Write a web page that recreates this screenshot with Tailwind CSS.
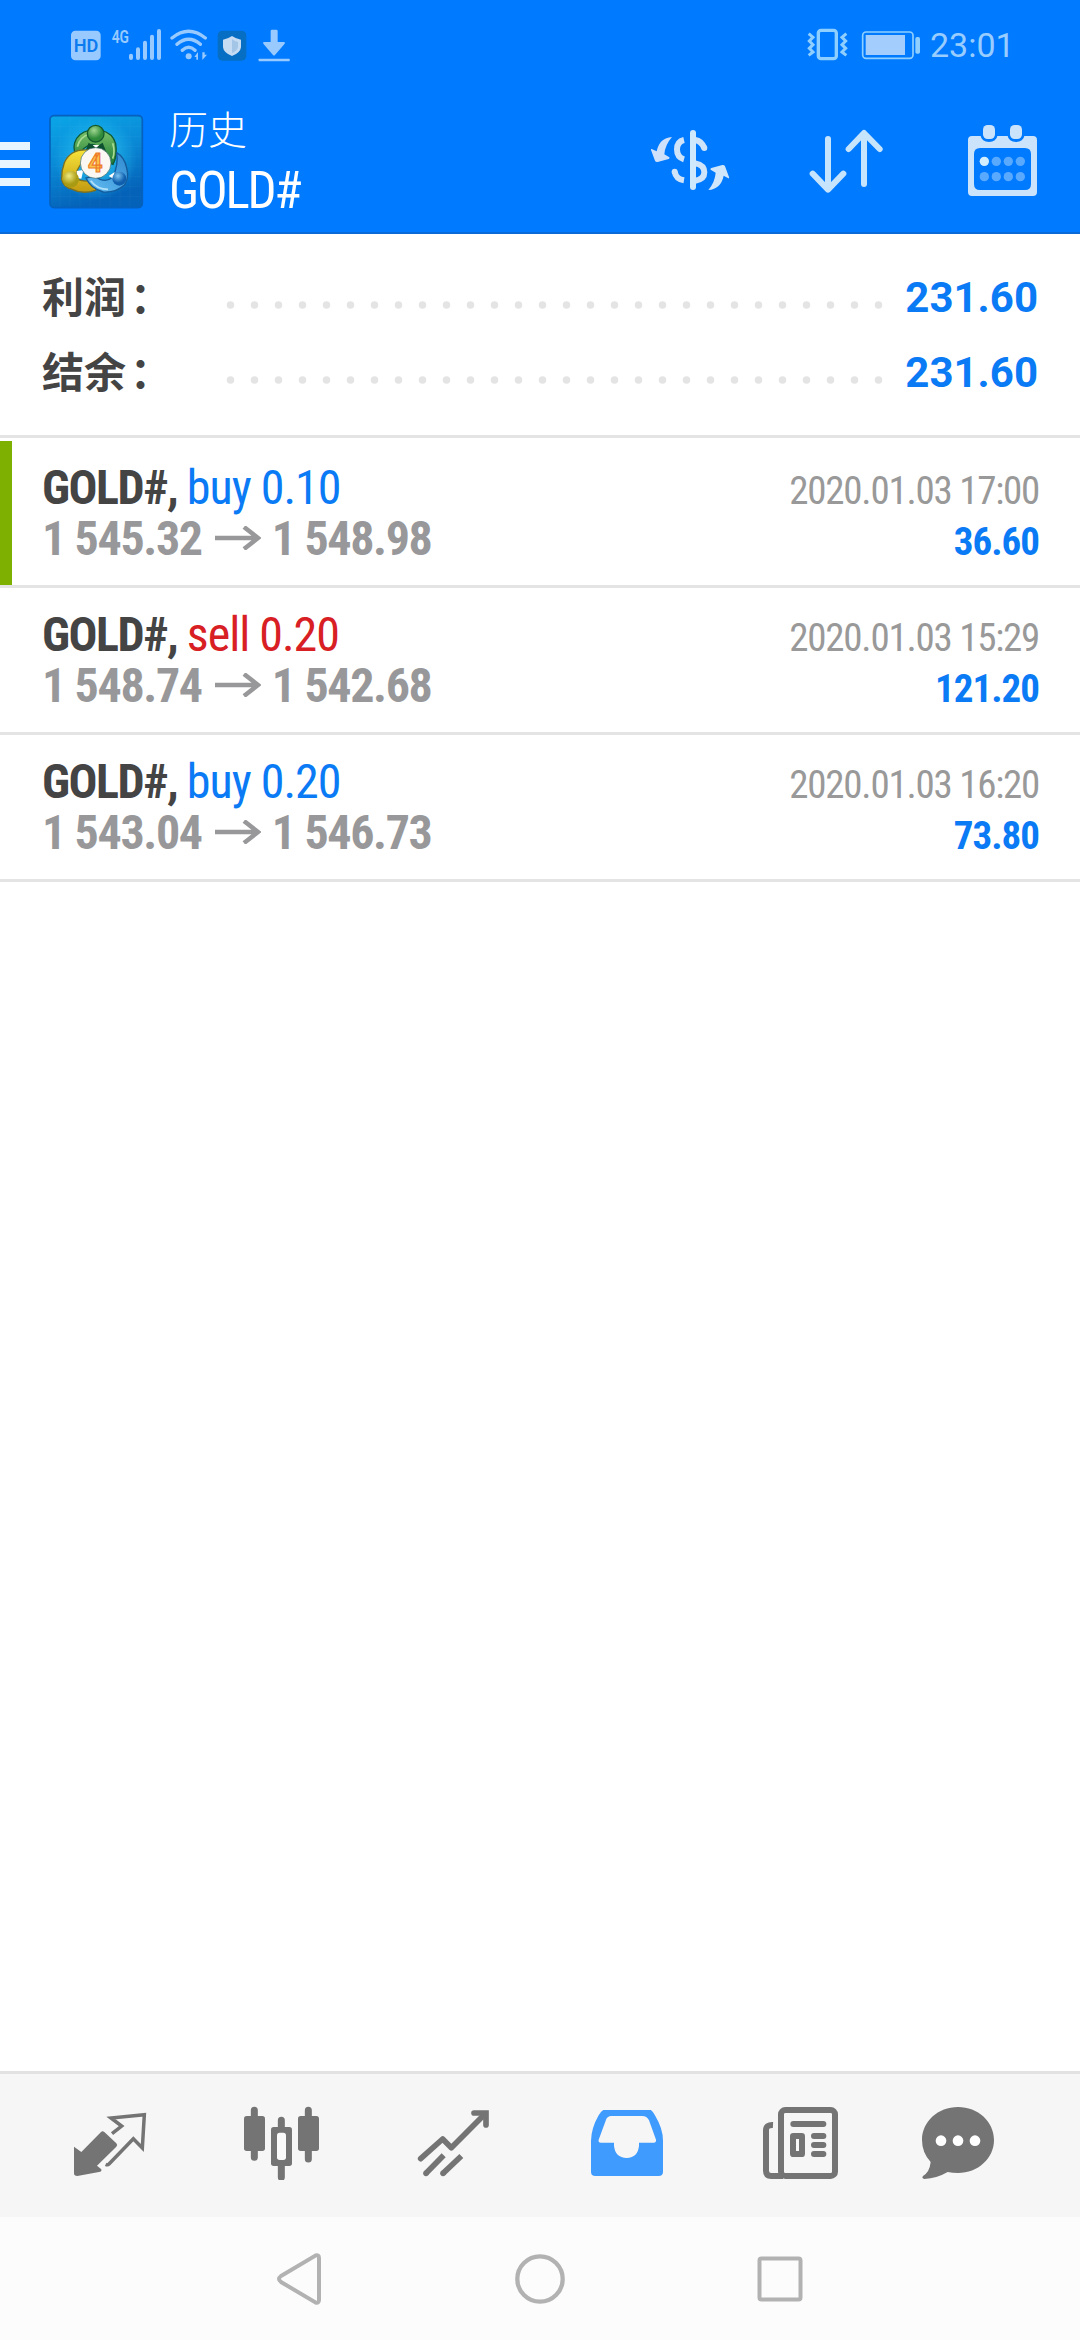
<!DOCTYPE html>
<html lang="zh-CN">
<head>
<meta charset="utf-8">
<title>历史</title>
<script src="https://cdn.jsdelivr.net/npm/@tailwindcss/browser@4"></script>
</head>
<body class="bg-white">
<div class="flex h-[2340px] w-[1080px] flex-col overflow-hidden bg-white font-['Roboto','Noto_Sans_CJK_SC',sans-serif]">

  <header class="h-[234px] shrink-0 border-b-2 border-[#0a6ad6] bg-[#007aff]">
    <!-- status bar -->
    <div class="flex h-[90px] items-start pt-7">
      <svg class="ml-[70px] h-[34px] w-8 overflow-visible" viewBox="60 55 96 102"><rect x="63" y="63" width="89" height="89" rx="13" fill="#99caff"/><text x="71" y="127" textLength="74" lengthAdjust="spacingAndGlyphs" font-size="54" font-weight="600" fill="#0d7bf0">HD</text></svg>
      <svg class="ml-[9px] h-[34px] w-[52px] overflow-visible" viewBox="183 55 156 102"><text x="185" y="101" textLength="52" lengthAdjust="spacingAndGlyphs" font-size="57" font-weight="600" fill="#99caff">4G</text><g stroke="#99caff" stroke-width="12" stroke-linecap="round"><path d="M243 138v7M264 119v26M285 99v46M306 81v64M327 64v81"/></g></svg>
      <svg class="ml-1.5 h-[34px] w-10" viewBox="357 55 120 102"><g fill="none" stroke="#99caff" stroke-width="10" stroke-linecap="round"><path d="M366 85Q416 45 466 85M381 104Q416 74 451 104M397 122Q416 104 435 122"/></g><circle cx="416" cy="140" r="9" fill="#99caff"/><path d="M433 142l11-15v23h-5v-8zM457 128v23l14-16h-7v-7z" fill="#99caff"/></svg>
      <svg class="ml-[7px] h-[34px] w-8" viewBox="498 55 96 102"><rect x="503" y="63" width="86" height="90" rx="14" fill="#066fc4"/><path d="M546 79q13 9 27 11v23q-2 17-27 26q-25-9-27-26V90q14-2 27-11z" fill="#c5dcf3"/><path d="M546 88v42q15-6 18-18V97q-9-2-18-9z" fill="#a4c6e6"/></svg>
      <svg class="ml-[9px] h-[34px] w-[34px]" viewBox="621 55 102 102"><path d="M662 64q0-4 4-4h13q4 0 4 4v33h20q3 2 1 5l-29 34q-3 3-6 0l-29-34q-2-3 1-5h21z" fill="#99caff"/><rect x="626" y="147" width="93" height="8" rx="2" fill="#99caff"/></svg>
      <svg class="ml-[515px] h-[34px] w-[43px]" viewBox="78 55 129 102"><g fill="none" stroke="#8fcfff"><rect x="115" y="62" width="54" height="85" rx="8" stroke-width="10"/><path stroke-width="9" d="M86 72l13 11-11 11 11 11-11 11 11 11-13 10M199 72l-13 11 11 11-11 11 11 11-11 11 13 10"/></g></svg>
      <svg class="ml-3 h-[34px] w-[60px]" viewBox="243 55 180 102"><rect x="248" y="67" width="151" height="79" rx="10" fill="none" stroke="#8fcfff" stroke-width="5"/><rect x="257" y="76" width="118" height="60" fill="#a3cdfc"/><rect x="406" y="82" width="14" height="50" rx="5" fill="#8fcfff"/></svg>
      <span class="ml-[9px] text-[34px] leading-[34px] text-[#99cdff]">23:01</span>
    </div>
    <!-- toolbar -->
    <div class="flex h-[142px] items-start">
      <div class="mt-[52px] flex w-[30px] flex-col gap-2.5">
        <div class="h-2 bg-[#e6f5ff]"></div><div class="h-2 bg-[#e6f5ff]"></div><div class="h-2 bg-[#e6f5ff]"></div>
      </div>
      <svg class="mt-6 ml-[18px] h-24 w-24" viewBox="144 72 288 288">
        <defs>
          <linearGradient id="bg" x1="0" y1="0" x2=".3" y2="1"><stop offset="0" stop-color="#0aa6e8"/><stop offset=".5" stop-color="#0a8ad6"/><stop offset="1" stop-color="#0462b8"/></linearGradient>
          <radialGradient id="halo"><stop offset="0" stop-color="#29c8f5"/><stop offset="1" stop-color="#29c8f5" stop-opacity="0"/></radialGradient>
          <linearGradient id="gr" x1="0" y1="0" x2="0" y2="1"><stop offset="0" stop-color="#7cc36a"/><stop offset="1" stop-color="#1d7a35"/></linearGradient>
          <linearGradient id="ye" x1="0" y1="0" x2="0" y2="1"><stop offset="0" stop-color="#f6e23a"/><stop offset="1" stop-color="#c29a10"/></linearGradient>
          <linearGradient id="bl" x1="1" y1="0" x2="0" y2="1"><stop offset="0" stop-color="#3089cf"/><stop offset="1" stop-color="#63bdf2"/></linearGradient>
          <radialGradient id="gb" cx=".4" cy=".3"><stop offset="0" stop-color="#a0d890"/><stop offset="1" stop-color="#2f8a3a"/></radialGradient>
          <radialGradient id="yb" cx=".4" cy=".3"><stop offset="0" stop-color="#f0ea80"/><stop offset="1" stop-color="#a89a12"/></radialGradient>
          <radialGradient id="bb" cx=".4" cy=".3"><stop offset="0" stop-color="#7cc4f2"/><stop offset="1" stop-color="#0f5fae"/></radialGradient>
        </defs>
        <rect x="150" y="77" width="277" height="276" rx="12" fill="url(#bg)" stroke="#0561bd" stroke-width="5"/>
        <path d="M180 80v270M210 80v270M240 80v270M270 80v270M300 80v270M330 80v270M360 80v270M390 80v270M153 110h270M153 140h270M153 170h270M153 200h270M153 230h270M153 260h270M153 290h270M153 320h270" stroke="#fff" stroke-opacity=".07" stroke-width="1.5"/>
        <circle cx="286" cy="205" r="125" fill="url(#halo)"/>
        <path d="M238 200q-22-12-14-42q10-30 44-37h36q34 8 43 40q6 36-8 62l-24-10q4-40-38-50q-30 5-39 37z" fill="url(#gr)" stroke="#115a35" stroke-width="4"/>
        <path d="M232 170q8-30 36-38M338 160q8 26 0 46" fill="none" stroke="#a9dc92" stroke-width="5"/>
        <path d="M266 158q20 18 42 0l12 30h-66z" fill="#0e5130"/>
        <path d="M278 165h20l-10 9z" fill="#fff"/>
        <path d="M262 180q-50-3-69 38q-9 24-8 50q5 24 32 30q30 16 70 3q8-12-16-28q-30 2-42-9q-6-20 22-52z" fill="url(#ye)" stroke="#7c7020" stroke-width="4"/>
        <path d="M350 188q24 14 30 46q8 30-6 50q-26 24-64 22q-38-10-52-42l26-6q30 24 54 4q18-36 12-74z" fill="url(#bl)" stroke="#135b9b" stroke-width="4"/>
        <path d="M272 272q20 26 52 26" fill="none" stroke="#b4e2fb" stroke-width="5"/>
        <path d="M230 243l20-3-6 26-14-3zM326 258l18-12-4 20z" fill="#fff"/>
        <circle cx="287" cy="131" r="25" fill="url(#gb)" stroke="#155a2e" stroke-width="4"/>
        <circle cx="212" cy="268" r="25" fill="url(#yb)"/>
        <circle cx="358" cy="266" r="21" fill="url(#bb)"/>
        <circle cx="287" cy="219" r="46" fill="#fbf8f4" stroke="#3a6a6a" stroke-width="2"/>
        <text x="286" y="246" text-anchor="middle" font-size="76" font-weight="700" fill="#fbc44a" stroke="#ee7a2a" stroke-width="3.5">4</text>
      </svg>
      <div class="mt-[18px] ml-[25px] flex w-[481px] flex-col whitespace-nowrap text-white">
        <span class="text-[39px] leading-[46px] font-light">历史</span>
        <span class="mt-[9px] text-[51px] leading-[56px] tracking-[-2.2px] [font-stretch:75%]">GOLD#</span>
      </div>
      <svg class="mt-[30px] h-20 w-20" viewBox="60 60 240 240">
        <g fill="none" stroke="#cfe3f9" stroke-width="18"><path d="M162 120q-21 5-21 28q0 24 21 30"/><path d="M196 120q18 3 27 24"/><path d="M134 215q4 22 28 26"/><path d="M196 190q27 5 27 27q0 21-27 25"/></g>
        <circle cx="223" cy="144" r="9" fill="#cfe3f9"/><circle cx="134" cy="215" r="9" fill="#cfe3f9"/>
        <path d="M189 99v162" stroke="#cfe8fb" stroke-width="18" stroke-linecap="round"/>
        <path d="M126 111q-38 3-46 43l-15-7q-3-1-2 3l12 32q2 5 8 4l33-9q6-3 1-6l-14-8q2-28 23-52z" fill="#cfe0fb"/>
        <path d="M235 270q38-3 46-43l14 8q3 1 2-4l-12-32q-2-5-8-4l-33 9q-6 3-1 6l14 8q-2 28-22 52z" fill="#cfe6fb"/>
      </svg>
      <svg class="mt-[30px] ml-[77px] h-20 w-20" viewBox="531 60 240 240">
        <g fill="none" stroke="#c6e4fc" stroke-width="18" stroke-linecap="round" stroke-linejoin="round"><path d="M594 117v151M548 221l46 48 46-48M702 252V100M656 147l46-48 47 48"/></g>
      </svg>
      <svg class="mt-[30px] ml-[76px] h-20 w-20" viewBox="999 60 240 240">
        <path fill-rule="evenodd" fill="#cce4fb" d="M1026 108H1052q3 17 25 18q22-1 25-18h31q3 17 25 18q22-1 25-18h26q12 0 12 12v156q0 12-12 12h-183q-12 0-12-12V120q0-12 12-12zM1050 144q-18 0-18 18v90q0 18 18 18h135q18 0 18-18v-90q0-18-18-18z"/>
        <rect x="1059" y="75" width="36" height="42" rx="14" fill="#cce4fb"/><rect x="1140" y="75" width="36" height="42" rx="14" fill="#cce4fb"/>
        <circle cx="1063" cy="184" r="14" fill="#d2eeff"/>
        <g fill="#59a9ff"><circle cx="1099" cy="184" r="14"/><circle cx="1135" cy="184" r="14"/><circle cx="1171" cy="184" r="14"/><circle cx="1063" cy="230" r="14"/><circle cx="1099" cy="230" r="14"/><circle cx="1135" cy="230" r="14"/><circle cx="1171" cy="230" r="14"/></g>
      </svg>
    </div>
  </header>

  <!-- totals -->
  <section class="h-[204px] shrink-0 border-b-3 border-[#e4e4e4] px-[42px] pt-[26px] text-[42px] leading-[75px] font-bold">
    <div class="flex h-[75px]">
      <span class="flex w-[184px] pt-px text-[#444]">利润<span class="ml-1">：</span></span>
      <svg class="h-[75px] w-[660px]" viewBox="0 0 660 75"><path d="M4.500 45H653" stroke="#e4e4e4" stroke-width="7.500" stroke-linecap="round" stroke-dasharray="0 24"/></svg>
      <span class="flex-1 text-right text-[#0a7af5]">231.60</span>
    </div>
    <div class="flex h-[75px]">
      <span class="flex w-[184px] pt-px text-[#444]">结余<span class="ml-1">：</span></span>
      <svg class="h-[75px] w-[660px]" viewBox="0 0 660 75"><path d="M4.500 45H653" stroke="#e4e4e4" stroke-width="7.500" stroke-linecap="round" stroke-dasharray="0 24"/></svg>
      <span class="flex-1 text-right text-[#0a7af5]">231.60</span>
    </div>
  </section>

  <!-- deals -->
  <main class="flex-1 pt-[3px] leading-[51px] whitespace-nowrap [font-stretch:75%]">
    <div class="flex h-[147px] border-b-3 border-[#e4e4e4]">
      <div class="w-3 bg-[#7eb002]"></div>
      <div class="flex-1 pt-[21px] pr-[42px] pl-[30px]">
        <div class="flex h-[51px] items-baseline justify-between"><span class="text-5xl leading-[51px]"><b class="tracking-[-1.5px] text-[#444]">GOLD#, </b><span class="tracking-[-1px] text-[#0a7af5]">buy 0.10</span></span><span class="-mr-px text-[39px] tracking-[-1.25px] text-[#999]">2020.01.03 17:00</span></div>
        <div class="flex h-[51px] items-baseline justify-between font-bold"><span class="flex items-baseline text-5xl leading-[51px] tracking-[-1.35px] text-[#98989a]">1 545.32<svg class="mr-[11px] ml-[13px] h-6 w-[46px] -translate-y-[5px]" viewBox="0 0 46 24"><path d="M0 12H43M29 1L43 12L29 23" fill="none" stroke="#98989a" stroke-width="4.500"/></svg>1 548.98</span><span class="-mr-px text-[39px] tracking-[-1px] text-[#0a7af5]">36.60</span></div>
      </div>
    </div>
    <div class="flex h-[147px] border-b-3 border-[#e4e4e4]">
      <div class="w-3"></div>
      <div class="flex-1 pt-[21px] pr-[42px] pl-[30px]">
        <div class="flex h-[51px] items-baseline justify-between"><span class="text-5xl leading-[51px]"><b class="tracking-[-1.5px] text-[#444]">GOLD#, </b><span class="tracking-[-1px] text-[#d82024]">sell 0.20</span></span><span class="-mr-px text-[39px] tracking-[-1.25px] text-[#999]">2020.01.03 15:29</span></div>
        <div class="flex h-[51px] items-baseline justify-between font-bold"><span class="flex items-baseline text-5xl leading-[51px] tracking-[-1.35px] text-[#98989a]">1 548.74<svg class="mr-[11px] ml-[13px] h-6 w-[46px] -translate-y-[5px]" viewBox="0 0 46 24"><path d="M0 12H43M29 1L43 12L29 23" fill="none" stroke="#98989a" stroke-width="4.500"/></svg>1 542.68</span><span class="-mr-px text-[39px] tracking-[-1px] text-[#0a7af5]">121.20</span></div>
      </div>
    </div>
    <div class="flex h-[147px] border-b-3 border-[#e4e4e4]">
      <div class="w-3"></div>
      <div class="flex-1 pt-[21px] pr-[42px] pl-[30px]">
        <div class="flex h-[51px] items-baseline justify-between"><span class="text-5xl leading-[51px]"><b class="tracking-[-1.5px] text-[#444]">GOLD#, </b><span class="tracking-[-1px] text-[#0a7af5]">buy 0.20</span></span><span class="-mr-px text-[39px] tracking-[-1.25px] text-[#999]">2020.01.03 16:20</span></div>
        <div class="flex h-[51px] items-baseline justify-between font-bold"><span class="flex items-baseline text-5xl leading-[51px] tracking-[-1.35px] text-[#98989a]">1 543.04<svg class="mr-[11px] ml-[13px] h-6 w-[46px] -translate-y-[5px]" viewBox="0 0 46 24"><path d="M0 12H43M29 1L43 12L29 23" fill="none" stroke="#98989a" stroke-width="4.500"/></svg>1 546.73</span><span class="-mr-px text-[39px] tracking-[-1px] text-[#0a7af5]">73.80</span></div>
      </div>
    </div>
  </main>

  <!-- tabs -->
  <nav class="flex h-[146px] shrink-0 border-t-3 border-[#e2e2e2] bg-[#f6f6f6] pt-[26px] pl-[70px]">
    <svg class="h-20 w-20" viewBox="90 120 240 240"><path d="M102 260l22 16 59-60q5-5 10 0l36 34q5 5 0 10l-58 57 13 11q2 6-3 7l-69 13q-10 0-10-8z" fill="#747474"/><path d="M216 221l29-23-32-24 100-10-6 100-27-28-73 76q-4 4-10 1" fill="none" stroke="#747474" stroke-width="10.500"/></svg>
    <svg class="ml-[91px] h-20 w-20" viewBox="603 120 240 240"><g stroke="#747474" stroke-width="21" stroke-linecap="round"><path d="M643 151v141M724 181v20M724 318v34M805 151v146"/></g><g fill="#747474"><rect x="612" y="168" width="63" height="105" rx="8"/><rect x="774" y="168" width="63" height="105" rx="8"/><rect x="693" y="201" width="63" height="117" rx="8"/></g><rect x="711" y="218" width="27" height="82" rx="8" fill="#fafafa"/></svg>
    <svg class="ml-[92px] h-20 w-20" viewBox="1119 120 240 240"><g fill="none" stroke="#747474" stroke-width="17"><path d="M1142 296l66-59 26 26 100-100" stroke-linejoin="round" stroke-linecap="round"/><path d="M1302 159h36v36" stroke-linecap="round"/><path d="M1158 340l53-54M1209 340l55-52"/></g><circle cx="1158" cy="340" r="8.500" fill="#747474"/><circle cx="1209" cy="340" r="8.500" fill="#747474"/></svg>
    <svg class="ml-[94px] h-20 w-20" viewBox="81 120 240 240"><path fill="#409bff" d="M130 150H272q6 3 14 18q23 38 23 74v93q0 13-13 13H106q-13 0-13-13v-93q1-38 23-76q8-13 14-16z"/><path fill="#f6f6f6" d="M154 168h92q15 0 21 13l21 58q1 9-7 9h-44v9q-3 35-37 37q-35-2-38-37v-9h-39q-9 0-7-9l21-57q4-14 17-14z"/></svg>
    <svg class="ml-[93px] h-20 w-20" viewBox="600 120 240 240"><g fill="none" stroke="#747474" stroke-width="18"><rect x="663" y="150" width="162" height="198" rx="13"/><path d="M639 195q-21-1-21 16v121q0 16 16 16h35"/></g><g stroke="#747474" stroke-width="18" stroke-linecap="round"><path d="M700 192h90M762 228h28M762 255h28M762 282h28"/></g><rect x="690" y="219" width="45" height="72" rx="10" fill="#747474"/><rect x="708" y="237" width="9" height="36" fill="#fafafa"/></svg>
    <svg class="ml-[78px] h-20 w-20" viewBox="1074 120 240 240"><path fill="#747474" d="M1194 141c60 0 108 44 108 99s-48 99-108 99q-16 0-31-3q-32 19-70 21q-9-2-4-9q20-12 23-42q-26-28-26-66c0-55 48-99 108-99z"/><g fill="#fff"><circle cx="1143" cy="242" r="16"/><circle cx="1194" cy="242" r="16"/><circle cx="1245" cy="242" r="16"/></g></svg>
  </nav>

  <!-- system keys -->
  <div class="flex h-[123px] shrink-0 items-center bg-[#fcfcfc] pl-[270px]">
    <svg class="h-[60px] w-[60px]" viewBox="0 0 60 60"><path d="M11 27L45.500 6.500Q49 5.500 49 9V51Q49 54.500 45.500 53.500L11 33Q7 30 11 27Z" fill="none" stroke="#b2b2b2" stroke-width="4"/></svg>
    <svg class="ml-[180px] h-[60px] w-[60px]" viewBox="0 0 60 60"><circle cx="30" cy="30" r="22.700" fill="none" stroke="#b2b2b2" stroke-width="4.300"/></svg>
    <svg class="ml-[180px] h-[60px] w-[60px]" viewBox="0 0 60 60"><rect x="9.500" y="9.500" width="41" height="41" rx="2" fill="none" stroke="#b2b2b2" stroke-width="4"/></svg>
  </div>
</div>
</body>
</html>
